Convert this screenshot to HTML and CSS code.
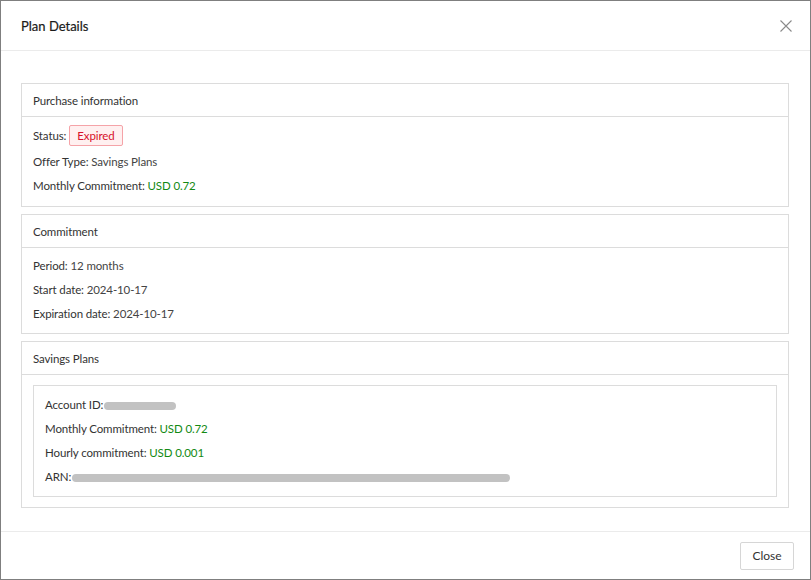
FILE: index.html
```html
<!DOCTYPE html>
<html lang="en">
<head>
<meta charset="utf-8">
<title>Plan Details</title>
<link rel="stylesheet" href="styles.css">
</head>
<body>
<div class="dialog">
  <div class="dialog-header">
    <span class="dialog-title">Plan Details</span>
    <svg class="close-icon" width="12" height="12" viewBox="0 0 12 12"><path d="M0.5 0.5L11.5 11.5M11.5 0.5L0.5 11.5" stroke="#8a8a8a" stroke-width="1.1" fill="none"/></svg>
  </div>
  <div class="dialog-body">
    <section class="card">
      <div class="card-header">Purchase information</div>
      <div class="card-body">
        <div class="row row-badge"><span class="label">Status:</span><span class="badge">Expired</span></div>
        <div class="row row-tall"><span class="label">Offer Type:</span> <span class="value">Savings Plans</span></div>
        <div class="row"><span class="label">Monthly Commitment:</span> <span class="money">USD 0.72</span></div>
      </div>
    </section>
    <section class="card">
      <div class="card-header">Commitment</div>
      <div class="card-body card-body-plain">
        <div class="row"><span class="label">Period:</span> <span class="value">12 months</span></div>
        <div class="row"><span class="label">Start date:</span> <span class="value">2024-10-17</span></div>
        <div class="row"><span class="label">Expiration date:</span> <span class="value">2024-10-17</span></div>
      </div>
    </section>
    <section class="card">
      <div class="card-header">Savings Plans</div>
      <div class="card-body card-body-boxed">
        <div class="inner-box">
          <div class="row"><span class="label">Account ID:</span><span class="redact redact-id"></span></div>
          <div class="row"><span class="label">Monthly Commitment:</span> <span class="money">USD 0.72</span></div>
          <div class="row"><span class="label">Hourly commitment:</span> <span class="money">USD 0.001</span></div>
          <div class="row"><span class="label">ARN:</span><span class="redact redact-arn"></span></div>
        </div>
      </div>
    </section>
  </div>
  <div class="dialog-footer">
    <button class="btn">Close</button>
  </div>
</div>
</body>
</html>
```

FILE: styles.css
```css
* { box-sizing: border-box; }
html, body { margin: 0; padding: 0; background: #fff; }
body {
  font-family: Lato, "Liberation Sans", sans-serif;
  font-size: 11.5px;
  letter-spacing: -0.12px;
  color: #333;
}
.dialog {
  width: 811px;
  height: 580px;
  border: 1px solid #7f7f7f;
  display: flex;
  flex-direction: column;
  background: #fff;
}
.dialog-header {
  height: 50px;
  flex: none;
  border-bottom: 1px solid #ebebeb;
  display: flex;
  align-items: center;
  justify-content: space-between;
  padding: 0 18px 0 20px;
}
.dialog-title {
  font-size: 13px;
  letter-spacing: 0;
  font-weight: 400;
  color: #1a1a1a;
  -webkit-text-stroke: 0.2px #1a1a1a;
}
.close-icon { display: block; }
.dialog-body {
  flex: 1;
  padding: 32px 21px 22px 20px;
  display: flex;
  flex-direction: column;
  gap: 7px;
}
.card {
  border: 1px solid #dcdcdc;
}
.card-header {
  height: 33px;
  border-bottom: 1px solid #dcdcdc;
  padding: 0 11px;
  display: flex;
  align-items: center;
  color: #333;
}
.card-body {
  padding: 5px 11px 8px;
}
.card-body-plain {
  padding: 6px 11px 7px;
}
.card-body-boxed {
  padding: 10px 11px 10px;
}
.inner-box {
  border: 1px solid #dcdcdc;
  padding: 7px 11px 7px;
}
.row {
  height: 24px;
  line-height: 24px;
  white-space: nowrap;
}
.row-tall {
  height: 25px;
  line-height: 26px;
}
.row-badge {
  height: 27px;
  display: flex;
  align-items: center;
}
.label { color: #333; }
.value { color: #444; }
.money { color: #138a13; }
.badge {
  margin-left: 3px;
  height: 21px;
  padding: 0 7px;
  border: 1px solid #f5a3a8;
  background: #fff0f0;
  color: #d7102b;
  display: inline-flex;
  align-items: center;
  border-radius: 2px;
}
.redact {
  display: inline-block;
  vertical-align: middle;
  margin-left: 1px;
  height: 8px;
  border-radius: 4px;
  background: #c2c2c2;
}
.redact-id { width: 72px; }
.redact-arn { width: 438px; }
.dialog-footer {
  flex: none;
  height: 48px;
  border-top: 1px solid #ebebeb;
  display: flex;
  align-items: center;
  justify-content: flex-end;
  padding: 0 16px;
}
.btn {
  font-family: inherit;
  font-size: 12px;
  color: #333;
  background: #fff;
  border: 1px solid #d6d6d6;
  height: 28px;
  width: 54px;
  padding: 0;
  border-radius: 2px;
}
```
